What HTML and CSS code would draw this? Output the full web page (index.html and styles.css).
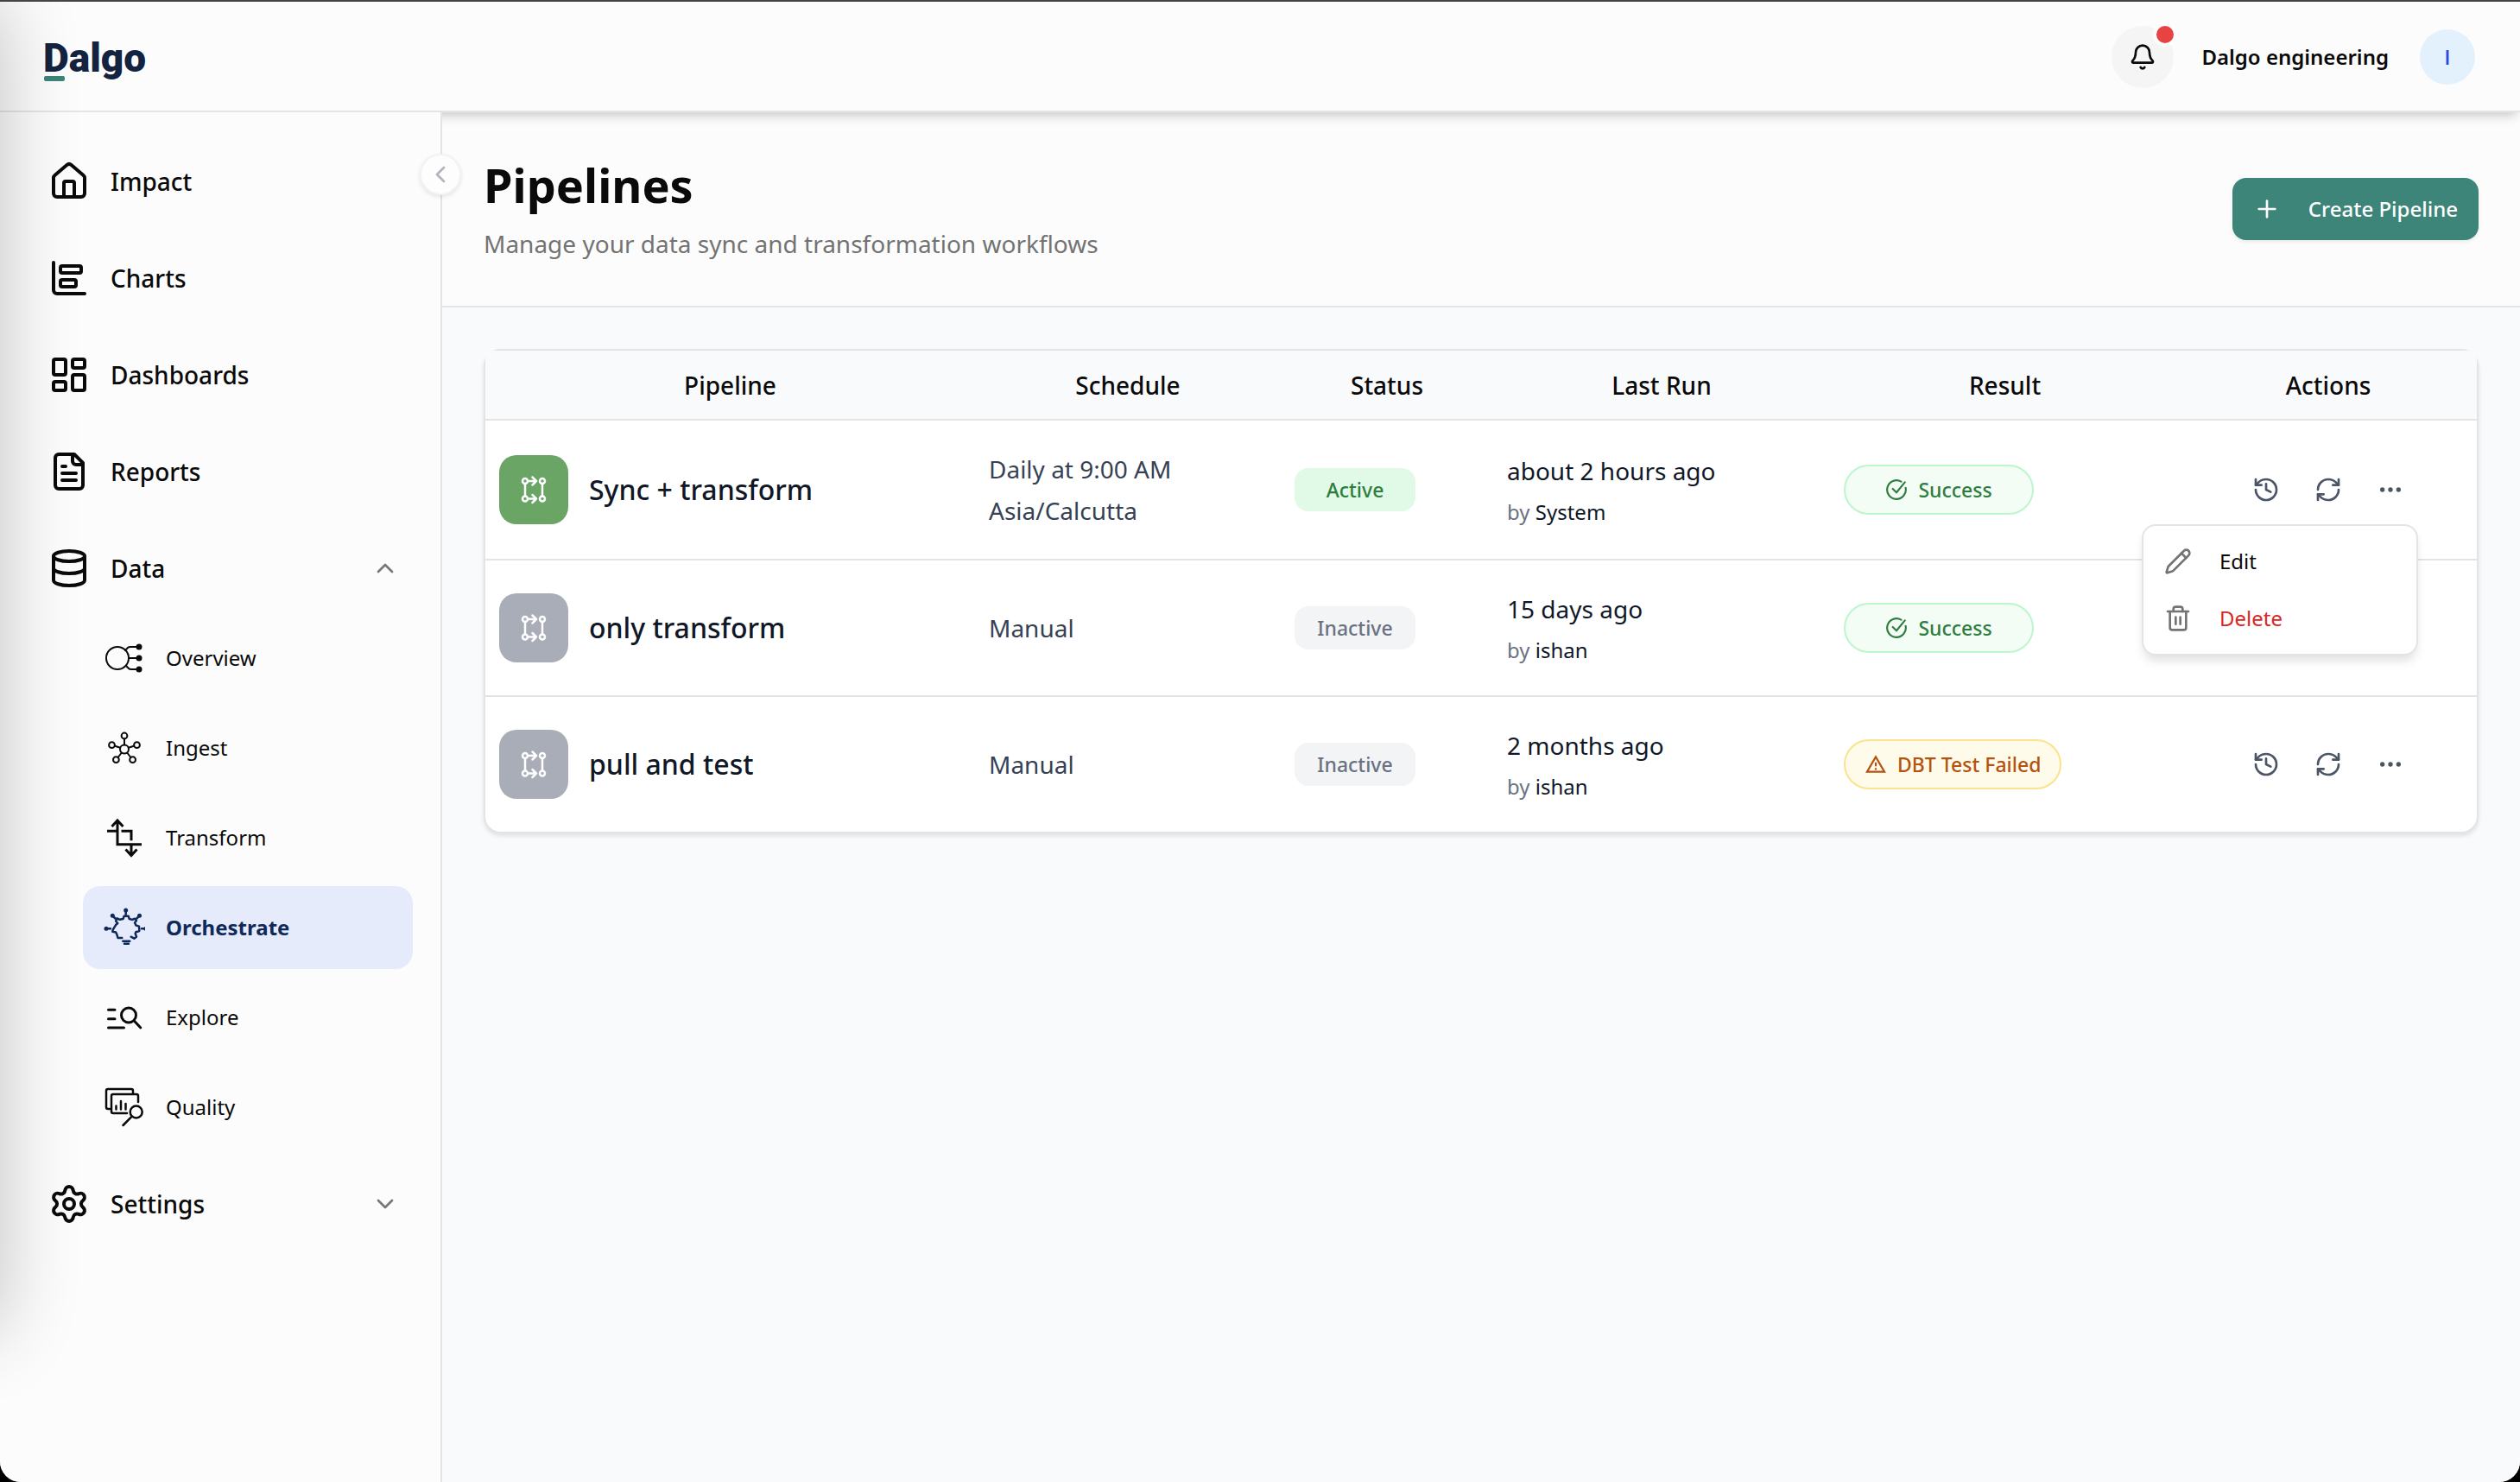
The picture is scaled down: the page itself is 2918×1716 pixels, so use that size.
FILE: index.html
```html
<!DOCTYPE html>
<html lang="en">
<head>
    <meta charset="UTF-8">
    <meta name="viewport" content="width=device-width, initial-scale=1.0">
    <title>Dalgo - Pipelines</title>
    <link rel="stylesheet" href="styles.css">
</head>
<body>
    <!-- Shared icons -->
    <svg class="sprite" aria-hidden="true">
        <symbol id="chevron-left" viewBox="0 0 24 24"><path d="m15 18-6-6 6-6"/></symbol>
        <symbol id="chevron-up" viewBox="0 0 24 24"><path d="m18 15-6-6-6 6"/></symbol>
        <symbol id="chevron-down" viewBox="0 0 24 24"><path d="m6 9 6 6 6-6"/></symbol>
        <symbol id="history" viewBox="0 0 24 24">
            <path d="M3 12a9 9 0 1 0 9-9 9.75 9.75 0 0 0-6.74 2.74L3 8"/>
            <path d="M3 3v5h5"/>
            <path d="M12 7v5l4 2"/>
        </symbol>
        <symbol id="refresh" viewBox="0 0 24 24">
            <path d="M3 12a9 9 0 0 1 9-9 9.75 9.75 0 0 1 6.74 2.74L21 8"/>
            <path d="M21 3v5h-5"/>
            <path d="M21 12a9 9 0 0 1-9 9 9.75 9.75 0 0 1-6.74-2.74L3 16"/>
            <path d="M8 16H3v5"/>
        </symbol>
        <symbol id="more" viewBox="0 0 24 24">
            <circle cx="12" cy="12" r="1"/>
            <circle cx="19" cy="12" r="1"/>
            <circle cx="5" cy="12" r="1"/>
        </symbol>
        <symbol id="check-circle" viewBox="0 0 24 24">
            <path d="M21.801 10A10 10 0 1 1 17 3.335"/>
            <path d="m8 11 4 4L21 4"/>
        </symbol>
        <symbol id="flow" viewBox="0 0 40 40">
            <circle cx="10" cy="10" r="3"/>
            <circle cx="30" cy="10" r="3"/>
            <circle cx="10" cy="30.5" r="3"/>
            <circle cx="30" cy="30.5" r="3"/>
            <path d="M10 13v14.5M30 13v14.5M13 10h10M13 30.5h10M18.5 5.5 23 10l-4.5 4.5M18.5 26l4.5 4.5-4.5 4.5"/>
        </symbol>
    </svg>

    <div class="app">
        <header class="topbar">
            <a class="logo" href="#"><span class="logo-initial">D</span>algo</a>
            <div class="topbar-right">
                <button class="bell" type="button" aria-label="Notifications">
                    <svg class="icon" viewBox="0 0 24 24">
                        <path d="M10.268 21a2 2 0 0 0 3.464 0"/>
                        <path d="M3.262 15.326A1 1 0 0 0 4 17h16a1 1 0 0 0 .74-1.673C19.41 13.956 18 12.499 18 8A6 6 0 0 0 6 8c0 4.499-1.411 5.956-2.738 7.326"/>
                    </svg>
                    <span class="bell-dot"></span>
                </button>
                <span class="org-name">Dalgo engineering</span>
                <button class="avatar" type="button">I</button>
            </div>
        </header>

        <div class="layout">
            <aside class="sidebar">
                <button class="collapse" type="button" aria-label="Collapse sidebar">
                    <svg class="icon"><use href="#chevron-left"/></svg>
                </button>
                <nav class="nav">
                    <a class="nav-item" href="#">
                        <svg class="nav-icon" viewBox="0 0 24 24">
                            <path d="M15 21v-8a1 1 0 0 0-1-1h-4a1 1 0 0 0-1 1v8"/>
                            <path d="M3 10a2 2 0 0 1 .709-1.528l7-5.999a2 2 0 0 1 2.582 0l7 5.999A2 2 0 0 1 21 10v9a2 2 0 0 1-2 2H5a2 2 0 0 1-2-2z"/>
                        </svg>
                        <span>Impact</span>
                    </a>
                    <a class="nav-item" href="#">
                        <svg class="nav-icon" viewBox="0 0 24 24">
                            <path d="M3 3v16a2 2 0 0 0 2 2h16"/>
                            <rect x="7" y="13" width="9" height="4" rx="1"/>
                            <rect x="7" y="5" width="12" height="4" rx="1"/>
                        </svg>
                        <span>Charts</span>
                    </a>
                    <a class="nav-item" href="#">
                        <svg class="nav-icon" viewBox="0 0 24 24">
                            <rect x="3" y="3" width="7" height="9" rx="1"/>
                            <rect x="14" y="3" width="7" height="5" rx="1"/>
                            <rect x="14" y="12" width="7" height="9" rx="1"/>
                            <rect x="3" y="16" width="7" height="5" rx="1"/>
                        </svg>
                        <span>Dashboards</span>
                    </a>
                    <a class="nav-item" href="#">
                        <svg class="nav-icon" viewBox="0 0 24 24">
                            <path d="M15 2H6a2 2 0 0 0-2 2v16a2 2 0 0 0 2 2h12a2 2 0 0 0 2-2V7Z"/>
                            <path d="M14 2v4a2 2 0 0 0 2 2h4"/>
                            <path d="M10 9H8M16 13H8M16 17H8"/>
                        </svg>
                        <span>Reports</span>
                    </a>
                    <div class="nav-group">
                        <button class="nav-item" type="button" aria-expanded="true">
                            <svg class="nav-icon" viewBox="0 0 24 24">
                                <ellipse cx="12" cy="5" rx="9" ry="3"/>
                                <path d="M3 5v14a9 3 0 0 0 18 0V5"/>
                                <path d="M3 12a9 3 0 0 0 18 0"/>
                            </svg>
                            <span>Data</span>
                            <svg class="icon nav-chevron"><use href="#chevron-up"/></svg>
                        </button>
                        <div class="subnav">
                            <a class="subnav-item" href="#">
                                <svg class="sub-icon" viewBox="0 0 48 48">
                                    <circle cx="16" cy="24" r="13"/>
                                    <path d="M25 15l3-3q1-1 3-1h9M29 24h11M26 33l3 3q1 1 3 1h8"/>
                                    <g class="solid">
                                        <circle cx="41" cy="11" r="3.5"/>
                                        <circle cx="41" cy="24" r="3.5"/>
                                        <circle cx="41" cy="37" r="3.5"/>
                                    </g>
                                </svg>
                                <span>Overview</span>
                            </a>
                            <a class="subnav-item" href="#">
                                <svg class="sub-icon" viewBox="0 0 48 48">
                                    <circle cx="24" cy="25.5" r="5"/>
                                    <circle cx="24" cy="10" r="3.4"/>
                                    <circle cx="9.5" cy="20.7" r="3.4"/>
                                    <circle cx="38.5" cy="20.7" r="3.4"/>
                                    <circle cx="14.4" cy="37.7" r="3.4"/>
                                    <circle cx="33.6" cy="37.7" r="3.4"/>
                                    <path d="M24 13.5v7M13 21.8l6.2 2M35 21.8l-6.2 2M16.6 35l4.2-5.5M31.4 35l-4.2-5.5"/>
                                </svg>
                                <span>Ingest</span>
                            </a>
                            <a class="subnav-item" href="#">
                                <svg class="sub-icon" viewBox="0 0 48 48">
                                    <g class="square">
                                        <path d="M44 31.7H16V4M9.5 11 16 4l6.500 7"/>
                                        <path d="M4 16.3h12M20.5 16.3H32v11"/>
                                        <path d="M32 31.7V44M25.5 37.5l6.5 7 6.500-7"/>
                                    </g>
                                </svg>
                                <span>Transform</span>
                            </a>
                            <a class="subnav-item active" href="#">
                                <svg class="sub-icon" viewBox="0 0 48 48">
                                    <g class="medium">
                                        <path d="M21.3 36H16.5l-1.3-4.3-1-2.3-3.900-.7.7-2.5 3.3-5.5 2-1.7-2.2-2.5 1.4-3.2 3.2 1.5 3.8-.8 1.2-3.3h5l1 3.3 3.6.9 2.7-1.2 2 2.3-2 2.3 1.3 3 3.7 1.4.3 5.3-4 1.3-.6 1.7 1.3 3.7-2.7 2-3.6-2"/>
                                        <path d="M22.3 39.7h8M24 42.7h5"/>
                                        <path d="M25.7 4v5M10.3 10.3l3.2 3.2M41.5 10.3l-3.2 3.2M3 25.3h5M44 25.3h5"/>
                                    </g>
                                    <g class="solid">
                                        <circle cx="25.7" cy="4" r="2.5"/>
                                        <circle cx="10.3" cy="10.3" r="2.5"/>
                                        <circle cx="41.5" cy="10.3" r="2.5"/>
                                        <circle cx="3" cy="25.3" r="2.5"/>
                                        <circle cx="48.8" cy="25.3" r="2.5"/>
                                    </g>
                                </svg>
                                <span>Orchestrate</span>
                            </a>
                            <a class="subnav-item" href="#">
                                <svg class="sub-icon" viewBox="0 0 48 48">
                                    <g class="heavy">
                                        <path d="M5.5 15.3h7.5M5.5 25.7h7.5M5.5 36h18"/>
                                        <circle cx="29" cy="21.5" r="8.5"/>
                                        <path d="m35.3 28 7.5 8"/>
                                    </g>
                                </svg>
                                <span>Explore</span>
                            </a>
                            <a class="subnav-item" href="#">
                                <svg class="sub-icon" viewBox="0 0 48 48">
                                    <g class="medium">
                                        <path d="M7 26H5q-2 0-2-2V5q0-2 2-2h27q2 0 2 2v3"/>
                                        <path d="M27 31H11q-2 0-2-2V11q0-2 2-2h27q2 0 2 2v7"/>
                                        <path d="M14.5 22.5v4M20 17v9.5M25.5 20v6.5"/>
                                        <circle cx="37.7" cy="29.5" r="7"/>
                                        <path d="M32.5 34.8 22.5 45"/>
                                    </g>
                                </svg>
                                <span>Quality</span>
                            </a>
                        </div>
                    </div>
                    <button class="nav-item" type="button" aria-expanded="false">
                        <svg class="nav-icon" viewBox="0 0 24 24">
                            <path d="M9.671 4.136a2.34 2.34 0 0 1 4.659 0 2.34 2.34 0 0 0 3.319 1.915 2.34 2.34 0 0 1 2.33 4.033 2.34 2.34 0 0 0 0 3.831 2.34 2.34 0 0 1-2.33 4.033 2.34 2.34 0 0 0-3.319 1.915 2.34 2.34 0 0 1-4.659 0 2.34 2.34 0 0 0-3.32-1.915 2.34 2.34 0 0 1-2.33-4.033 2.34 2.34 0 0 0 0-3.831A2.34 2.34 0 0 1 6.35 6.051a2.34 2.34 0 0 0 3.319-1.915"/>
                            <circle cx="12" cy="12" r="3"/>
                        </svg>
                        <span>Settings</span>
                        <svg class="icon nav-chevron"><use href="#chevron-down"/></svg>
                    </button>
                </nav>
            </aside>

            <main class="content">
                <div class="page-header">
                    <div>
                        <h1>Pipelines</h1>
                        <p>Manage your data sync and transformation workflows</p>
                    </div>
                    <button class="create-btn" type="button">
                        <svg class="icon" viewBox="0 0 24 24"><path d="M5 12h14M12 5v14"/></svg>
                        <span>Create Pipeline</span>
                    </button>
                </div>

                <div class="table-area">
                    <div class="table-card">
                        <table>
                            <colgroup>
                                <col class="col-pipeline">
                                <col class="col-schedule">
                                <col class="col-status">
                                <col class="col-last-run">
                                <col class="col-result">
                                <col class="col-actions">
                            </colgroup>
                            <thead>
                                <tr>
                                    <th>Pipeline</th>
                                    <th>Schedule</th>
                                    <th>Status</th>
                                    <th>Last Run</th>
                                    <th>Result</th>
                                    <th>Actions</th>
                                </tr>
                            </thead>
                            <tbody>
                                <tr>
                                    <td>
                                        <div class="pipeline">
                                            <span class="tile tile-active"><svg><use href="#flow"/></svg></span>
                                            <span>Sync + transform</span>
                                        </div>
                                    </td>
                                    <td class="schedule">Daily at 9:00 AM<br>Asia/Calcutta</td>
                                    <td><span class="status status-active">Active</span></td>
                                    <td>
                                        <div class="run-time">about 2 hours ago</div>
                                        <div class="run-by">by <span>System</span></div>
                                    </td>
                                    <td>
                                        <span class="result result-success"><svg><use href="#check-circle"/></svg>Success</span>
                                    </td>
                                    <td>
                                        <div class="actions">
                                            <button type="button" aria-label="History"><svg class="icon"><use href="#history"/></svg></button>
                                            <button type="button" aria-label="Run"><svg class="icon"><use href="#refresh"/></svg></button>
                                            <div class="more">
                                                <button type="button" aria-label="More"><svg class="icon"><use href="#more"/></svg></button>
                                                <div class="menu">
                                                    <button type="button">
                                                        <svg class="icon" viewBox="0 0 24 24">
                                                            <path d="M21.174 6.812a1 1 0 0 0-3.986-3.987L3.842 16.174a2 2 0 0 0-.5.83l-1.321 4.352a.5.5 0 0 0 .623.622l4.353-1.32a2 2 0 0 0 .83-.497z"/>
                                                            <path d="m15 5 4 4"/>
                                                        </svg>
                                                        <span>Edit</span>
                                                    </button>
                                                    <button class="danger" type="button">
                                                        <svg class="icon" viewBox="0 0 24 24">
                                                            <path d="M3 6h18"/>
                                                            <path d="M19 6v14a2 2 0 0 1-2 2H7a2 2 0 0 1-2-2V6"/>
                                                            <path d="M8 6V4a2 2 0 0 1 2-2h4a2 2 0 0 1 2 2v2"/>
                                                            <path d="M10 11v6M14 11v6"/>
                                                        </svg>
                                                        <span>Delete</span>
                                                    </button>
                                                </div>
                                            </div>
                                        </div>
                                    </td>
                                </tr>
                                <tr>
                                    <td>
                                        <div class="pipeline">
                                            <span class="tile"><svg><use href="#flow"/></svg></span>
                                            <span>only transform</span>
                                        </div>
                                    </td>
                                    <td class="schedule">Manual</td>
                                    <td><span class="status">Inactive</span></td>
                                    <td>
                                        <div class="run-time">15 days ago</div>
                                        <div class="run-by">by <span>ishan</span></div>
                                    </td>
                                    <td>
                                        <span class="result result-success"><svg><use href="#check-circle"/></svg>Success</span>
                                    </td>
                                    <td>
                                        <div class="actions">
                                            <button type="button" aria-label="History"><svg class="icon"><use href="#history"/></svg></button>
                                            <button type="button" aria-label="Run"><svg class="icon"><use href="#refresh"/></svg></button>
                                            <button type="button" aria-label="More"><svg class="icon"><use href="#more"/></svg></button>
                                        </div>
                                    </td>
                                </tr>
                                <tr>
                                    <td>
                                        <div class="pipeline">
                                            <span class="tile"><svg><use href="#flow"/></svg></span>
                                            <span>pull and test</span>
                                        </div>
                                    </td>
                                    <td class="schedule">Manual</td>
                                    <td><span class="status">Inactive</span></td>
                                    <td>
                                        <div class="run-time">2 months ago</div>
                                        <div class="run-by">by <span>ishan</span></div>
                                    </td>
                                    <td>
                                        <span class="result result-warning">
                                            <svg viewBox="0 0 24 24"><path d="M12 4 2.7 20h18.6z"/><path d="M12 10v4M12 16v2"/></svg>DBT Test Failed
                                        </span>
                                    </td>
                                    <td>
                                        <div class="actions">
                                            <button type="button" aria-label="History"><svg class="icon"><use href="#history"/></svg></button>
                                            <button type="button" aria-label="Run"><svg class="icon"><use href="#refresh"/></svg></button>
                                            <button type="button" aria-label="More"><svg class="icon"><use href="#more"/></svg></button>
                                        </div>
                                    </td>
                                </tr>
                            </tbody>
                        </table>
                    </div>
                </div>
            </main>
        </div>
    </div>
</body>
</html>
```
FILE: styles.css
```css
* {
    box-sizing: border-box;
}

html {
    background-color: #000;
}

body {
    margin: 0;
    font-family: "Noto Sans", sans-serif;
    font-size: 28px;
    line-height: 48px;
    color: #0a0a0a;
}

a {
    color: inherit;
    text-decoration: none;
}

button {
    padding: 0;
    border: none;
    background: none;
    color: inherit;
    font: inherit;
    cursor: pointer;
}

svg {
    flex-shrink: 0;
    fill: none;
    stroke: currentColor;
    stroke-width: 2;
    stroke-linecap: round;
    stroke-linejoin: round;
}

.sprite {
    position: absolute;
    width: 0;
    height: 0;
}

.icon {
    display: block;
    width: 32px;
    height: 32px;
}

.app {
    position: relative;
    display: flex;
    flex-direction: column;
    min-height: 100vh;
    background-color: #fcfcfc;
    border-top: 2px solid #454344;
    border-radius: 0 0 24px 24px;
    overflow: hidden;
}

/* soft shade along the left edge of the window */
.app::before {
    content: "";
    position: absolute;
    z-index: 5;
    top: 0;
    bottom: 176px;
    left: -100px;
    width: 100px;
    box-shadow: 0 0 90px rgba(0, 0, 0, 0.24);
    pointer-events: none;
}

/* Top bar */
.topbar {
    position: relative;
    z-index: 1;
    display: flex;
    align-items: center;
    justify-content: space-between;
    height: 128px;
    padding: 2px 52px 0 50px;
    border-bottom: 2px solid #e4e4e4;
    box-shadow: 0 8px 12px -4px rgba(0, 0, 0, 0.2);
}

.logo {
    padding-top: 2px;
    font-family: Roboto, sans-serif;
    font-size: 46px;
    font-weight: 900;
    color: #14233f;
}

.logo-initial {
    position: relative;
}

.logo-initial::after {
    content: "";
    position: absolute;
    left: 1px;
    bottom: 0;
    width: 24px;
    height: 6px;
    border-radius: 2px;
    background-color: #3d8579;
}

.topbar-right {
    display: flex;
    align-items: center;
}

.bell {
    position: relative;
    display: flex;
    align-items: center;
    justify-content: center;
    width: 72px;
    height: 72px;
    margin-right: 32px;
    border-radius: 50%;
    background-color: #f5f5f5;
}

.bell-dot {
    position: absolute;
    top: -4px;
    right: -4px;
    width: 28px;
    height: 28px;
    border: 4px solid #fcfcfc;
    border-radius: 50%;
    background-color: #e84343;
}

.org-name {
    margin-right: 36px;
    font-size: 24px;
    font-weight: 600;
}

.avatar {
    width: 64px;
    height: 64px;
    border-radius: 50%;
    background-color: #e3f1fd;
    color: #2b4be0;
    font-family: "Open Sans", sans-serif;
    font-size: 24px;
    font-weight: 600;
}

.layout {
    flex: 1;
    display: flex;
}

/* Sidebar */
.sidebar {
    position: relative;
    z-index: 2;
    width: 512px;
    padding: 32px;
    border-right: 2px solid #e4e4e4;
    background-color: #fcfcfc;
}

.collapse {
    position: absolute;
    top: 48px;
    right: -24px;
    display: flex;
    align-items: center;
    justify-content: center;
    width: 48px;
    height: 48px;
    border: 2px solid #f3f3f3;
    border-radius: 50%;
    background-color: #fdfdfd;
    color: #b0b5c0;
    box-shadow: 0 2px 5px rgba(0, 0, 0, 0.1);
}

.nav {
    display: flex;
    flex-direction: column;
    gap: 16px;
}

.nav-item,
.subnav-item {
    display: flex;
    align-items: center;
    gap: 24px;
    width: 100%;
    height: 96px;
    padding: 0 16px 0 24px;
    border-radius: 20px;
    text-align: left;
}

.nav-item {
    font-weight: 500;
}

.nav-icon,
.sub-icon {
    width: 48px;
    height: 48px;
}

.nav-chevron {
    margin-left: auto;
    color: #777;
}

.subnav {
    display: flex;
    flex-direction: column;
    gap: 8px;
    margin-top: 8px;
    padding-left: 64px;
}

.subnav-item {
    font-size: 24px;
}

.subnav-item.active {
    background-color: #e6ebfc;
    color: #0f2a5a;
    font-weight: 700;
}

.solid {
    fill: currentColor;
    stroke: none;
}

.square {
    stroke-width: 3;
    stroke-linecap: butt;
    stroke-linejoin: miter;
}

.medium {
    stroke-width: 2.5;
}

.heavy {
    stroke-width: 3;
}

/* Page */
.content {
    flex: 1;
    background-color: #f9fafc;
}

.page-header {
    display: flex;
    align-items: center;
    justify-content: space-between;
    padding: 48px;
    border-bottom: 2px solid #e4e4e4;
    background-color: #fcfcfc;
}

h1 {
    margin: 0 0 8px;
    font-size: 54px;
    line-height: 72px;
    font-weight: 700;
}

p {
    margin: 0;
    color: #737373;
}

.create-btn {
    display: flex;
    align-items: center;
    gap: 32px;
    height: 72px;
    padding: 0 24px;
    border-radius: 16px;
    background-color: #3d8579;
    color: #fff;
    font-size: 24px;
    font-weight: 500;
    box-shadow: 0 2px 4px rgba(0, 0, 0, 0.08);
}

.table-area {
    padding: 48px;
}

.table-card {
    border: 2px solid #e4e4e4;
    border-radius: 20px;
    background-color: #fff;
    box-shadow: 0 3px 5px rgba(0, 0, 0, 0.1);
}

table {
    width: 100%;
    table-layout: fixed;
    border-spacing: 0;
}

.col-pipeline {
    width: 567px;
}

.col-schedule {
    width: 354px;
}

.col-status {
    width: 246px;
}

.col-last-run {
    width: 390px;
}

.col-result {
    width: 405px;
}

.col-actions {
    width: 344px;
}

th {
    height: 81px;
    padding: 0 16px;
    border-bottom: 2px solid #e4e4e4;
    background-color: #f9fafc;
    font-weight: 500;
}

td {
    padding: 32px 16px;
    border-bottom: 2px solid #e4e4e4;
}

tr:last-child td {
    border-bottom: none;
}

.pipeline {
    display: flex;
    align-items: center;
    gap: 24px;
    color: #101828;
    font-size: 32px;
    font-weight: 500;
}

.tile {
    display: flex;
    align-items: center;
    justify-content: center;
    width: 80px;
    height: 80px;
    border-radius: 20px;
    background-color: #a9adb8;
    color: #fff;
}

.tile svg {
    width: 40px;
    height: 40px;
    stroke-width: 2.5;
}

.tile-active {
    background-color: #6aa565;
}

.schedule {
    color: #364153;
}

.status {
    display: flex;
    align-items: center;
    justify-content: center;
    width: 140px;
    height: 50px;
    border-radius: 16px;
    background-color: #f3f4f6;
    color: #6a7282;
    font-size: 23px;
    font-weight: 500;
}

.status-active {
    background-color: #e0fae7;
    color: #2f7d3e;
}

.run-time {
    color: #101828;
}

.run-by {
    margin-top: 4px;
    color: #6a7282;
    font-size: 24px;
    line-height: 40px;
}

.run-by span {
    color: #101828;
}

.result {
    display: inline-flex;
    align-items: center;
    justify-content: center;
    gap: 12px;
    min-width: 220px;
    height: 58px;
    padding: 0 22px;
    border: 2px solid;
    border-radius: 29px;
    font-size: 23px;
    font-weight: 500;
    vertical-align: middle;
}

.result svg {
    width: 26px;
    height: 26px;
}

.result-success {
    border-color: #bdf5cd;
    background-color: #f3fdf6;
    color: #2f7d3e;
}

.result-warning {
    border-color: #fbe38c;
    background-color: #fffbeb;
    color: #b4530f;
}

.result-warning svg {
    stroke-linecap: butt;
    stroke-linejoin: miter;
}

.actions {
    display: flex;
    justify-content: center;
    gap: 8px;
    color: #4a5565;
}

.actions > button,
.more > button {
    display: flex;
    align-items: center;
    justify-content: center;
    width: 64px;
    height: 64px;
}

.more {
    position: relative;
}

.menu {
    position: absolute;
    z-index: 3;
    top: 72px;
    right: 0;
    width: 320px;
    padding: 8px;
    border: 2px solid #e4e4e4;
    border-radius: 16px;
    background-color: #fff;
    box-shadow: 0 8px 12px -2px rgba(0, 0, 0, 0.12);
}

.menu button {
    display: flex;
    align-items: center;
    gap: 32px;
    width: 100%;
    height: 66px;
    padding: 0 16px;
    color: #0a0a0a;
    font-size: 24px;
}

.menu .icon {
    color: #737373;
}

.menu .danger {
    color: #dc2626;
}
```
